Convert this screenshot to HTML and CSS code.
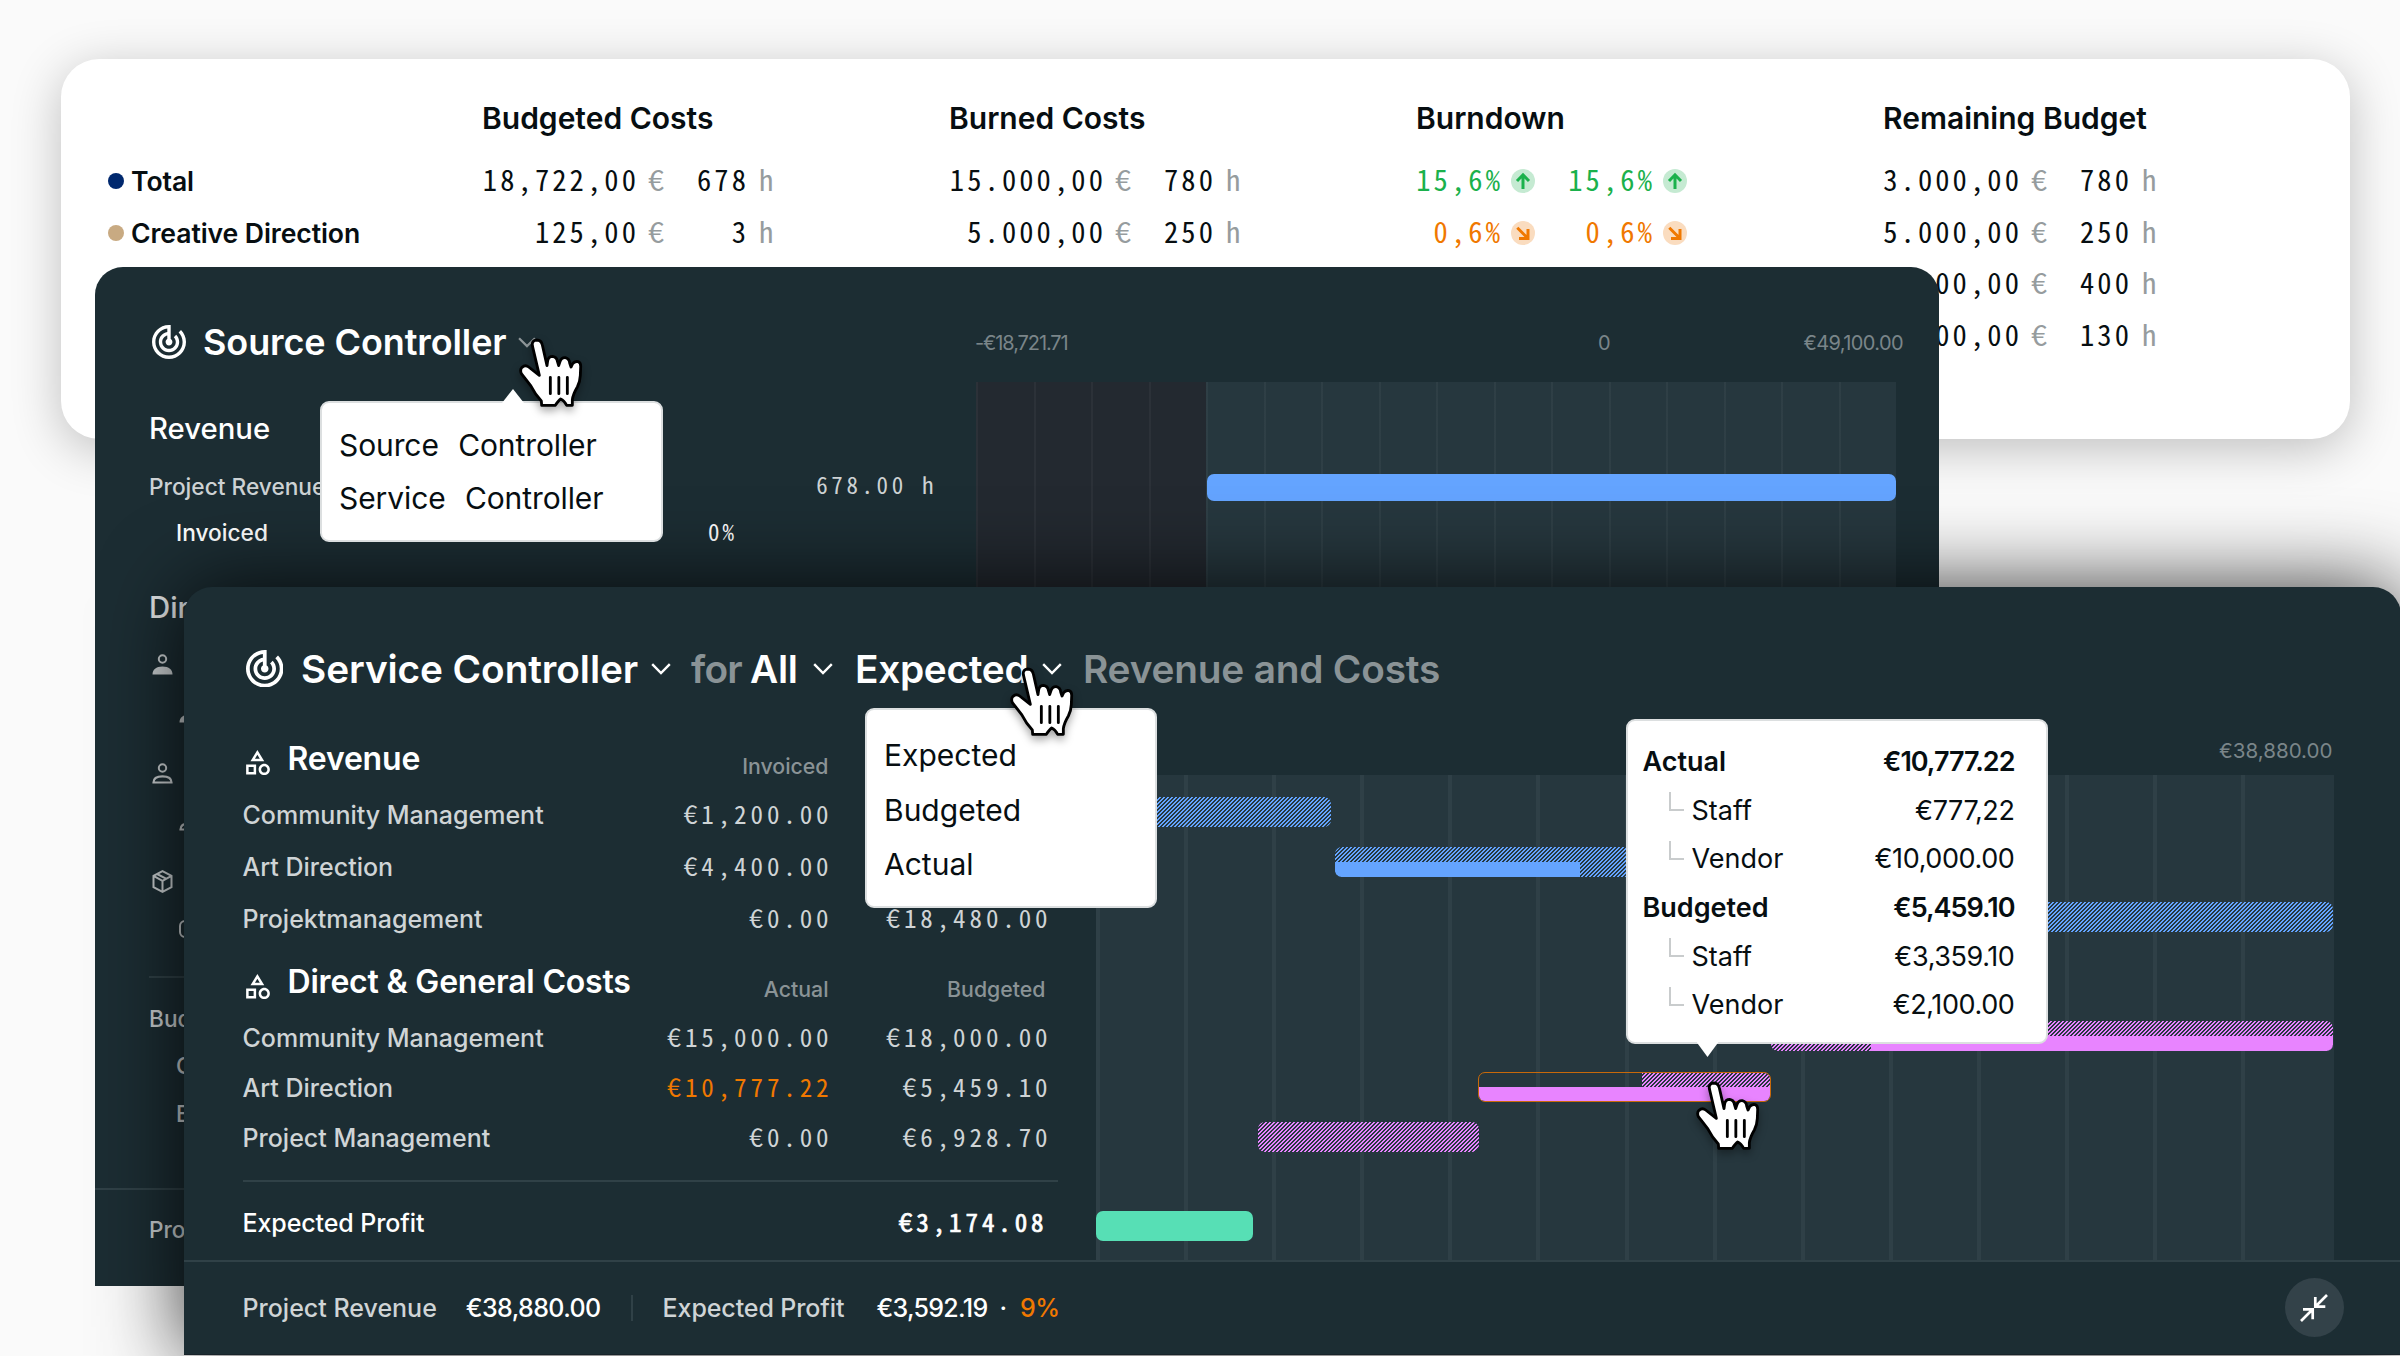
FILE: index.html
```html
<!DOCTYPE html>
<html lang="en">
<head>
  <meta charset="UTF-8" />
  <meta name="viewport" content="width=device-width, initial-scale=1.0" />
  <title>Project Controller</title>
  <link rel="stylesheet" href="styles.css">
</head>
<body>
  <!-- shared icons -->
  <svg class="sprite" width="0" height="0">
    <symbol id="track" viewBox="2 2 20 20"><path d="M19.07 4.93l-1.41 1.41C19.1 7.79 20 9.79 20 12c0 4.42-3.58 8-8 8s-8-3.58-8-8c0-4.08 3.05-7.44 7-7.93v2.02C8.16 6.57 6 9.03 6 12c0 3.31 2.69 6 6 6s6-2.69 6-6c0-1.66-.67-3.16-1.76-4.24l-1.41 1.41C15.55 9.9 16 10.9 16 12c0 2.21-1.79 4-4 4s-4-1.79-4-4c0-1.86 1.28-3.41 3-3.86v2.14c-.6.35-1 .98-1 1.72 0 1.1.9 2 2 2s2-.9 2-2c0-.74-.4-1.38-1-1.72V2h-1C6.48 2 2 6.48 2 12s4.48 10 10 10 10-4.48 10-10c0-2.76-1.12-5.26-2.93-7.07z" fill="currentColor"/></symbol>
    <symbol id="category" viewBox="3 2 19 20"><path d="M12 2l-5.5 9h11L12 2zm0 3.84L13.93 9h-3.87L12 5.84zM17.5 13c-2.49 0-4.5 2.01-4.5 4.5s2.01 4.5 4.5 4.5 4.5-2.01 4.5-4.5-2.01-4.5-4.5-4.5zm0 7c-1.38 0-2.5-1.12-2.5-2.5s1.12-2.5 2.5-2.5 2.5 1.12 2.5 2.5-1.12 2.5-2.5 2.5zM3 21.5h8v-8H3v8zm2-6h4v4H5v-4z" fill="currentColor"/></symbol>
    <symbol id="chevron" viewBox="0 0 20 12"><path d="M1.2 1.2L10 10l8.8-8.8" fill="none" stroke="currentColor" stroke-width="2.4"/></symbol>
    <symbol id="up" viewBox="0 0 24 24"><circle cx="12" cy="12" r="12" fill="#c5ead2"/><path d="M12 20V6.5M6 12l6-6.2 6 6.2" fill="none" stroke="#1bb14c" stroke-width="3"/></symbol>
    <symbol id="down" viewBox="0 0 24 24"><circle cx="12" cy="12" r="12" fill="#fadcbf"/><path d="M6.3 6.8l10 10M17 8v9.5H8" fill="none" stroke="#f07800" stroke-width="3"/></symbol>
    <symbol id="person" viewBox="0 0 21 21"><circle cx="10.5" cy="5" r="3.7" fill="none" stroke="currentColor" stroke-width="2"/><path d="M.5 20.5c0-5 3.5-8 10-8s10 3 10 8z" fill="currentColor"/></symbol>
    <symbol id="person-line" viewBox="0 0 21 21"><circle cx="10.5" cy="5" r="3.7" fill="none" stroke="currentColor" stroke-width="2"/><path d="M1.5 19.5c0-4 3-6.2 9-6.2s9 2.2 9 6.2z" fill="none" stroke="currentColor" stroke-width="2.2"/></symbol>
    <symbol id="box" viewBox="0 0 21 23"><path d="M10.5 1.2l9 4.6v11.4l-9 4.6-9-4.6V5.8zM1.5 5.8l9 5 9-5M10.5 10.8v11M5 4l9.5 4.8" fill="none" stroke="currentColor" stroke-width="2"/></symbol>
    <symbol id="hand" viewBox="54 50 200 216">
      <path d="M118 165L97 76Q95 60 110 59Q124 59 127 74L141 136L143 121Q146 108 158 108Q170 110 172 122L176 136L180 124Q184 111 196 112Q208 115 209 128L213 140L218 130Q224 122 234 124Q243 127 242 140L241 165Q240 185 232 200Q219 222 217 238L217 255L200 255Q192 240 182 236Q176 240 166 255L125 255L124 242Q105 222 92 196L64 160Q59 148 66 141Q76 132 86 140Z" fill="#fff" stroke="#000" stroke-width="8.5" stroke-linejoin="round"/>
      <path d="M151 171v49M176.5 171v49M202 171v49" stroke="#000" stroke-width="8.5" stroke-linecap="round"/>
    </symbol>
  </svg>

  <section class="budget">
    <div class="budget-row head">
      <span></span><span>Budgeted Costs</span><span>Burned Costs</span><span>Burndown</span><span>Remaining Budget</span>
    </div>
    <div class="budget-row">
      <span class="name"><i class="dot navy"></i>Total</span>
      <span class="cost"><b>18,722,00</b><em>€</em><b class="hours">678</b><em>h</em></span>
      <span class="cost"><b>15.000,00</b><em>€</em><b class="hours">780</b><em>h</em></span>
      <span class="trend up"><b>15,6%</b><svg><use href="#up"/></svg><b>15,6%</b><svg><use href="#up"/></svg></span>
      <span class="cost short"><b>3.000,00</b><em>€</em><b class="hours">780</b><em>h</em></span>
    </div>
    <div class="budget-row">
      <span class="name"><i class="dot sand"></i>Creative Direction</span>
      <span class="cost"><b>125,00</b><em>€</em><b class="hours">3</b><em>h</em></span>
      <span class="cost"><b>5.000,00</b><em>€</em><b class="hours">250</b><em>h</em></span>
      <span class="trend down"><b>0,6%</b><svg><use href="#down"/></svg><b>0,6%</b><svg><use href="#down"/></svg></span>
      <span class="cost short"><b>5.000,00</b><em>€</em><b class="hours">250</b><em>h</em></span>
    </div>
    <div class="budget-row">
      <span></span><span></span><span></span><span></span>
      <span class="cost short"><b>00,00</b><em>€</em><b class="hours">400</b><em>h</em></span>
    </div>
    <div class="budget-row">
      <span></span><span></span><span></span><span></span>
      <span class="cost short"><b>00,00</b><em>€</em><b class="hours">130</b><em>h</em></span>
    </div>
  </section>

  <section class="source">
    <div class="source-body">
      <div class="source-list">
        <h2 class="source-title"><svg class="track"><use href="#track"/></svg>Source Controller<svg class="chevron dim"><use href="#chevron"/></svg></h2>
        <h3>Revenue</h3>
        <div class="line project"><span>Project Revenue</span><span class="mono">678.00 h</span></div>
        <div class="line invoiced"><span>Invoiced</span><span class="mono">0%</span></div>
        <h3 class="costs">Direct</h3>
        <div class="line icon-a"><svg><use href="#person"/></svg></div>
        <div class="line icon-b sub"><svg><use href="#person"/></svg></div>
        <div class="line icon-c"><svg><use href="#person-line"/></svg></div>
        <div class="line icon-b sub"><svg><use href="#person-line"/></svg></div>
        <div class="line icon-c"><svg class="tall"><use href="#box"/></svg></div>
        <div class="line icon-b sub"><i class="card-icon"></i></div>
        <div class="rule"></div>
        <div class="line">Bud</div>
        <div class="line icon-b sub">C</div>
        <div class="line icon-b sub">E</div>
      </div>
      <div class="source-chart">
        <div class="scale"><span>-€18,721.71</span><span class="zero">0</span><span>€49,100.00</span></div>
        <div class="source-plot"><div class="bar blue"></div></div>
      </div>
    </div>
    <div class="source-foot">Pro</div>
  </section>

  <section class="service">
    <h2 class="service-title">
      <svg class="track"><use href="#track"/></svg>
      <span class="t-name">Service Controller</span><svg class="chevron"><use href="#chevron"/></svg>
      <span class="t-for">for</span><span class="t-all">All</span><svg class="chevron"><use href="#chevron"/></svg>
      <span class="t-exp">Expected</span><svg class="chevron"><use href="#chevron"/></svg>
      <span class="t-rest">Revenue and Costs</span>
    </h2>
    <div class="service-body">
      <div class="table">
        <div class="thead"><h3><svg><use href="#category"/></svg>Revenue</h3><span>Invoiced</span></div>
        <div class="tr"><span>Community Management</span><b>€1,200.00</b></div>
        <div class="tr"><span>Art Direction</span><b>€4,400.00</b></div>
        <div class="tr"><span>Projektmanagement</span><b>€0.00</b><b>€18,480.00</b></div>
        <div class="thead second"><h3><svg><use href="#category"/></svg>Direct &amp; General Costs</h3><span>Actual</span><span class="last">Budgeted</span></div>
        <div class="tr low"><span>Community Management</span><b>€15,000.00</b><b>€18,000.00</b></div>
        <div class="tr low"><span>Art Direction</span><b class="warn">€10,777.22</b><b>€5,459.10</b></div>
        <div class="tr low"><span>Project Management</span><b>€0.00</b><b>€6,928.70</b></div>
        <div class="tr profit"><span>Expected Profit</span><b></b><b>€3,174.08</b></div>
      </div>
      <div class="chart">
        <div class="chart-max">€38,880.00</div>
        <div class="plot">
          <div class="bar hatch" style="margin-left: 0; width: 235px"></div>
          <div class="bar hatch" style="margin-left: 239px; width: 340px"><i style="width: 245px"></i></div>
          <div class="bar hatch" style="margin-left: 577px; width: 660px"></div>
          <div class="bar hatch pink" style="margin-left: 675px; width: 562px"><i style="width: 462px; margin-left: 100px"></i></div>
          <div class="bar over pink" style="margin-left: 382px; width: 293px"><u style="width: 128px"></u><i></i></div>
          <div class="bar hatch pink" style="margin-left: 162px; width: 221px"></div>
          <div class="bar green" style="width: 157px"></div>
        </div>
      </div>
    </div>
    <div class="service-foot">
      <span>Project Revenue</span><strong>€38,880.00</strong>
      <i class="sep"></i>
      <span class="foot-profit">Expected Profit</span><strong class="profit-sum">€3,592.19</strong><span class="mid">·</span><strong class="warn">9%</strong>
      <button class="shrink" aria-label="Collapse">
        <svg viewBox="0 0 28 28"><path d="M27 1L15.5 12.5M15.3 3v9.7h10M1 27l11.5-11.5M3 15.3h9.7v10" fill="none" stroke="#fff" stroke-width="2.7"/></svg>
      </button>
    </div>
  </section>

  <div class="menu menu-source"><div>Source Controller</div><div>Service Controller</div></div>
  <div class="menu menu-type"><div>Expected</div><div>Budgeted</div><div>Actual</div></div>

  <div class="menu tooltip">
    <div class="tip total"><span>Actual</span><span>€10,777.22</span></div>
    <div class="tip"><span>Staff</span><span>€777,22</span></div>
    <div class="tip"><span>Vendor</span><span>€10,000.00</span></div>
    <div class="tip total"><span>Budgeted</span><span>€5,459.10</span></div>
    <div class="tip"><span>Staff</span><span>€3,359.10</span></div>
    <div class="tip"><span>Vendor</span><span>€2,100.00</span></div>
  </div>

  <svg class="hand hand-source"><use href="#hand"/></svg>
  <svg class="hand hand-type"><use href="#hand"/></svg>
  <svg class="hand hand-bar"><use href="#hand"/></svg>
</body>
</html>
```
FILE: styles.css
```css
* {
  margin: 0;
  padding: 0;
  box-sizing: border-box;
}

body {
  position: relative;
  width: 2400px;
  height: 1356px;
  overflow: hidden;
  background: #fafafa;
  font-family: "Inter", sans-serif;
  font-weight: 500;
  color: #070e11;
}

.sprite { display: block; }
svg { flex: none; }
i, em { font-style: normal; }

/* budget card */
.budget {
  position: absolute;
  left: 61px; top: 59px;
  width: 2289px; height: 380px;
  padding: 33px 47px;
  background: #fff;
  border-radius: 38px;
  box-shadow: 0 10px 50px rgba(0, 0, 0, 0.24);
}

.budget-row {
  display: grid;
  grid-template-columns: 374px 467px 467px 467px 1fr;
  align-items: center;
  height: 51.8px;
  font-size: 26.6px;
  white-space: nowrap;
}

.budget-row.head {
  height: 52px;
  margin-bottom: 11px;
  font-size: 30px;
  font-weight: 600;
}

.name, .cost, .trend {
  display: flex;
  align-items: center;
}

.name {
  font-weight: 600;
  letter-spacing: -0.1px;
}

.dot {
  width: 16px; height: 16px;
  margin-right: 7px;
  border-radius: 50%;
}

.navy { background: #00286e; }
.sand { background: #c8aa82; }

.cost, .trend, .mono, .tr b {
  font-family: "Noto Sans Mono CJK SC", monospace;
  font-weight: 400;
}

.cost, .trend {
  padding-bottom: 4px;
  font-size: 28.5px;
  line-height: 40px;
  letter-spacing: 3.1px;
}

.cost b, .trend b { font-weight: 400; }
.cost b { width: 157px; text-align: right; }
.cost.short b { width: 139px; }
.cost .hours, .cost.short .hours { width: 52px; margin-left: 31px; }
.cost em { width: 18px; margin-left: 9px; color: #969c9e; }
.cost .hours + em { margin-left: 10px; }

.trend b { width: 87px; text-align: right; }
.trend svg { width: 24px; height: 24px; margin: 4px 33px 0 8px; }
.up { color: #1bb14c; }
.down { color: #f07800; }

/* source controller */
.source {
  position: absolute;
  left: 95px; top: 267px;
  width: 1844px; height: 1019px;
  display: flex;
  flex-direction: column;
  overflow: hidden;
  background: #1c2d33;
  border-radius: 28px 28px 0 0;
  color: #cdd2d4;
}

.source-body {
  display: grid;
  grid-template-columns: 881px 920px;
  height: 921px;
}

.source-list { padding: 50px 0 0 54px; }

.source-title {
  display: flex;
  align-items: center;
  height: 50px;
  margin-bottom: 42px;
  font-size: 36px;
  font-weight: 600;
  letter-spacing: -0.1px;
  color: #fff;
}

.source-title .track { width: 34px; height: 34px; margin: 0 17px 0 3px; }
.chevron { width: 20px; height: 12px; }
.chevron.dim { width: 18px; height: 11px; margin-left: 11px; color: #8f979a; }

.source h3 {
  height: 40px;
  line-height: 40px;
  font-size: 29.3px;
  font-weight: 500;
  color: #fff;
}

.source h3.costs { margin-top: 35px; color: #e4e6e7; }

.line {
  display: flex;
  align-items: center;
  height: 40px;
  font-size: 22.7px;
}

.line svg { width: 21px; height: 21px; margin-left: 3px; }
.line svg.tall { height: 23px; }
.line .mono { padding-bottom: 4px; font-size: 23px; line-height: 32px; letter-spacing: 3.6px; }
.project { margin-top: 17px; }
.project .mono { margin-left: auto; margin-right: 39px; }
.invoiced { margin-top: 6.5px; padding-left: 27px; color: #fff; }
.invoiced .mono { margin-left: 440px; letter-spacing: 3px; }
.icon-a { margin-top: 17px; }
.icon-b { margin-top: 7.5px; }
.icon-c { margin-top: 21px; }
.sub { padding-left: 27px; }
.card-icon { width: 20px; height: 18px; margin-left: 3px; border: 2px solid; border-radius: 6px; }
.rule { height: 2px; margin: 27px 0 20px; background: #304147; }

.scale {
  display: grid;
  grid-template-columns: 622px 1fr auto;
  height: 115px;
  padding-top: 61px;
  font-size: 20px;
  font-weight: 400;
  line-height: 30px;
  letter-spacing: -0.6px;
  color: #7a8589;
}

.scale span:first-child { margin-left: -1px; letter-spacing: -1.1px; }
.scale span:last-child { margin-right: -7px; }

.source-plot {
  height: 806px;
  padding: 92px 0 0 230px;
  background:
    repeating-linear-gradient(90deg, rgba(255, 255, 255, 0.04) 0 2px, transparent 2px 57.5px),
    linear-gradient(90deg, #232930 230px, #26373e 230px);
}

.source-foot {
  height: 98px;
  padding: 25px 54px;
  border-top: 2px solid #304147;
  font-size: 22.6px;
  line-height: 30px;
}

.bar {
  height: 30px;
  border-radius: 7px;
}

.source-plot .bar { height: 27px; margin-left: 1px; }
.blue { background: #64a4ff; }
.green { background: #57dfb5; }

/* service controller */
.service {
  position: absolute;
  left: 183.5px; top: 587px;
  width: 2217px; height: 768px;
  padding-top: 56px;
  background: #1c2d33;
  border-radius: 28px 28px 0 0;
  box-shadow: 0 0 84px rgba(0, 0, 0, 0.8);
  color: #cfd4d6;
}

.service-title {
  display: flex;
  align-items: center;
  height: 51px;
  padding-left: 62px;
  font-size: 38.8px;
  font-weight: 600;
  color: #fff;
  white-space: nowrap;
}

.service-title .track { width: 37.5px; height: 37.5px; margin-right: 18px; }
.service-title .chevron { margin-left: 14px; }
.service-title .t-name { width: 336px; letter-spacing: -0.1px; }
.t-for { width: 51px; margin: 0 8px 0 20px; color: #8a9396; letter-spacing: -0.7px; }
.t-all { width: 49px; letter-spacing: -0.3px; }
.t-exp { width: 173px; margin-left: 22px; letter-spacing: -0.3px; }
.t-rest { margin-left: 21px; color: #8a9396; letter-spacing: -0.2px; }

.service-body {
  display: grid;
  grid-template-columns: 815px 1238px;
  column-gap: 38px;
  height: 566px;
  padding-left: 59px;
}

.thead, .tr {
  display: grid;
  grid-template-columns: 400px 186px 219px;
  align-items: center;
  height: 60px;
}

.thead { margin-top: 34px; }
.thead.second { margin-top: 7px; }

.thead h3 {
  display: flex;
  align-items: center;
  font-size: 32px;
  font-weight: 600;
  letter-spacing: -0.2px;
  color: #fff;
  white-space: nowrap;
}

.thead svg { width: 24px; height: 25px; margin: 9px 18px 0 3px; }

.thead span {
  padding-top: 15px;
  text-align: right;
  font-size: 21.3px;
  color: #8a9396;
}

.thead .last { padding-right: 2px; }

.tr { height: 52px; font-size: 25px; }
.tr.low { height: 50px; }
.thead + .tr { margin-top: 0.5px; }
.thead + .tr.low { margin-top: 1.5px; }

.tr b {
  margin-right: -4px;
  padding-bottom: 4px;
  text-align: right;
  font-size: 25px;
  line-height: 36px;
  letter-spacing: 3.9px;
}

b.warn, strong.warn { color: #f07800; }

.tr.profit {
  height: 69px;
  margin-top: 17px;
  padding: 15px 0 0;
  border-top: 2px solid #304147;
  color: #fff;
}

.tr.profit span { letter-spacing: -0.1px; }
.tr.profit b { padding-right: 4px; -webkit-text-stroke: 0.7px #fff; }

.chart-max {
  height: 39px;
  margin-top: 42px;
  padding-right: 1px;
  text-align: right;
  font-size: 20.6px;
  font-weight: 400;
  line-height: 30px;
  color: #7a8589;
}

.plot {
  height: 485px;
  padding-top: 22px;
  background:
    linear-gradient(#26373e, #26373e) right / 8px 100% no-repeat,
    repeating-linear-gradient(90deg, #2f4047 0 4px, #26373e 4px 88.1px);
}

/* bars follow the rows of the table */
.plot .bar { display: flex; align-items: flex-end; overflow: hidden; --c: #64a4ff; }
.plot .bar.pink { --c: #e884ff; }
.plot .bar:nth-child(2) { margin-top: 20px; }
.plot .bar:nth-child(3) { margin-top: 25px; }
.plot .bar:nth-child(4) { margin-top: 89px; }
.plot .bar:nth-child(5) { margin-top: 21px; }
.plot .bar:nth-child(6) { margin-top: 20px; }
.plot .bar:nth-child(7) { margin-top: 59px; }

.hatch, .over u {
  background: repeating-linear-gradient(135deg, var(--c) 0 1.4px, transparent 1.4px 2.828px);
}

.bar i { height: 15px; background: var(--c); }
.over { flex-direction: column; border: 1px solid #c8690a; }
.over u { height: 14px; }
.over i { width: 100%; height: 14px; }

.service-foot {
  display: flex;
  align-items: center;
  height: 95px;
  padding: 0 57px 1px 59px;
  border-top: 2px solid #304147;
  border-bottom: 1px solid #18232a;
  font-size: 25px;
}

.service-foot strong { margin-left: 29px; font-weight: 500; color: #fff; letter-spacing: -0.6px; }
.service-foot .foot-profit { letter-spacing: -0.1px; }
.service-foot .profit-sum { margin-left: 32px; letter-spacing: -0.7px; }
.service-foot .mid { margin-left: 12px; color: #fff; }
.service-foot .mid + strong { margin-left: 13px; color: #f07800; }
.sep { width: 2px; height: 26px; margin: 0 30px; background: #304147; }

.shrink {
  display: flex;
  align-items: center;
  justify-content: center;
  width: 59px; height: 59px;
  margin-left: auto;
  border: 0;
  border-radius: 50%;
  background: #334249;
}

.shrink svg { width: 28px; height: 28px; }

/* popovers */
.menu {
  position: absolute;
  background: #fff;
  border: 2px solid #dcdfe0;
  border-radius: 9px;
  font-weight: 400;
  font-size: 30px;
}

.menu-source {
  left: 320px; top: 401px;
  width: 343px; height: 141px;
  padding: 16px 17px;
  line-height: 53px;
  letter-spacing: -0.1px;
  word-spacing: 11px;
}

.menu-type {
  left: 865px; top: 708px;
  width: 292px; height: 200px;
  padding: 18px 17px;
  line-height: 54.5px;
}

.menu-source::before, .tooltip::after {
  content: "";
  position: absolute;
  width: 22px; height: 14px;
  background: #fff;
}

.menu-source::before {
  left: 180px; top: -14px;
  clip-path: polygon(50% 0, 100% 100%, 0 100%);
}

.tooltip {
  left: 1625.5px; top: 719px;
  width: 422px; height: 325px;
  padding: 16px 31px 0 15px;
}

.tooltip::after {
  left: 69px; bottom: -15px;
  height: 15px;
  clip-path: polygon(0 0, 100% 0, 50% 100%);
}

.tip {
  display: flex;
  align-items: center;
  height: 48.7px;
  font-size: 27px;
}

.tip span:last-child { margin-left: auto; letter-spacing: -0.4px; }
.tip.total { font-weight: 600; }
.tip.total span:last-child { letter-spacing: -1px; }
.tip:not(.total)::before {
  content: "";
  width: 13px; height: 17px;
  margin: 0 8px 17px 26px;
  border: solid #c9cccd;
  border-width: 0 0 2px 2px;
}

.hand {
  position: absolute;
  width: 66.7px; height: 72px;
  filter: drop-shadow(0 4px 4px rgba(0, 0, 0, 0.35));
}

.hand-source { left: 518px; top: 336.5px; }
.hand-type { left: 1009px; top: 666px; }
.hand-bar { left: 1694.5px; top: 1080px; }
```
